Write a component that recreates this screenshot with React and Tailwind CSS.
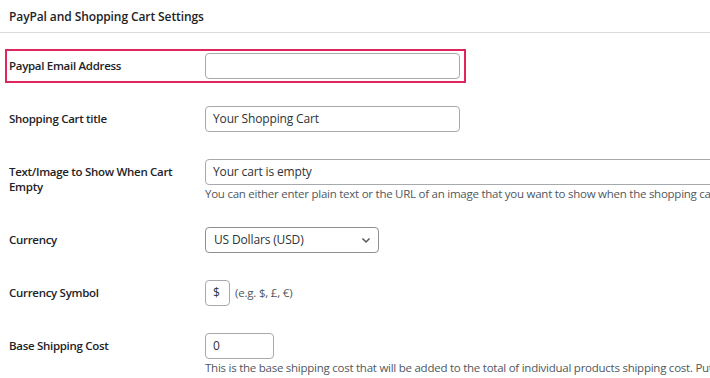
import React from 'react';

const font = { fontFamily: '"Open Sans", "Noto Sans", sans-serif' };

function Label({ children }) {
    return (
        <div className="w-[205px] shrink-0 pl-[9px] pr-[14px] pt-[5px] text-[11.5px] tracking-[-0.3px] leading-[15px] font-semibold text-[#1d2327]">
            {children}
        </div>
    );
}

function TextBox({ value, width }) {
    return (
        <div className={`${width} h-[26px] shrink-0 rounded-[4px] border border-[#a7aaad] bg-white px-[7px] flex items-center text-[12px] tracking-[-0.15px] text-[#2c3338]`}>
            {value}
        </div>
    );
}

function Note({ children }) {
    return (
        <div className="whitespace-nowrap text-[11.5px] tracking-[-0.25px] leading-[17px] text-[#50575e]">
            {children}
        </div>
    );
}

export default function App() {
    return (
        <div className="w-[710px] h-[378px] overflow-hidden bg-white" style={font}>
            <div className="h-[33px] border-b border-[#dcdcde] pl-[9px] pt-[2px] flex items-center">
                <h2 className="text-[12px] tracking-[-0.1px] font-semibold text-[#1d2327]">PayPal and Shopping Cart Settings</h2>
            </div>

            <div className="pt-[16px]">
                <div className="ml-[5px] w-[461px] h-[34px] border-2 border-[#e2245c] flex items-center pl-[2px]">
                    <div className="w-[196px] shrink-0 text-[11.5px] tracking-[-0.3px] font-semibold text-[#1d2327]">Paypal Email Address</div>
                    <TextBox value="" width="w-[255px]" />
                </div>
            </div>

            <div className="flex pt-[23px] items-start">
                <Label>Shopping Cart title</Label>
                <TextBox value="Your Shopping Cart" width="w-[255px]" />
            </div>

            <div className="flex pt-[27px] items-start">
                <Label>Text/Image to Show When Cart Empty</Label>
                <div className="flex flex-col">
                    <TextBox value="Your cart is empty" width="w-[540px]" />
                    <Note>You can either enter plain text or the URL of an image that you want to show when the shopping cart is empty</Note>
                </div>
            </div>

            <div className="flex pt-[25px] items-start">
                <Label>Currency</Label>
                <div className="w-[174px] h-[26px] rounded-[4px] border border-[#8c8f94] bg-white pl-[8px] pr-[6px] flex items-center justify-between text-[12px] tracking-[-0.15px] text-[#2c3338]">
                    <span>US Dollars (USD)</span>
                    <svg width="12" height="12" viewBox="0 0 12 12" fill="none" stroke="#50575e" strokeWidth="1.5">
                        <path d="M2.5 4.5 L6 8 L9.5 4.5" />
                    </svg>
                </div>
            </div>

            <div className="flex pt-[27px] items-start">
                <Label>Currency Symbol</Label>
                <div className="flex items-center">
                    <TextBox value="$" width="w-[25px]" />
                    <span className="ml-[5px] text-[11.5px] tracking-[-0.2px] text-[#50575e]">(e.g. $, £, €)</span>
                </div>
            </div>

            <div className="flex pt-[27px] items-start">
                <Label>Base Shipping Cost</Label>
                <div className="flex flex-col">
                    <TextBox value="0" width="w-[69px]" />
                    <Note>This is the base shipping cost that will be added to the total of individual products shipping cost. Put 0 if you do not want to charge</Note>
                </div>
            </div>
        </div>
    );
}
